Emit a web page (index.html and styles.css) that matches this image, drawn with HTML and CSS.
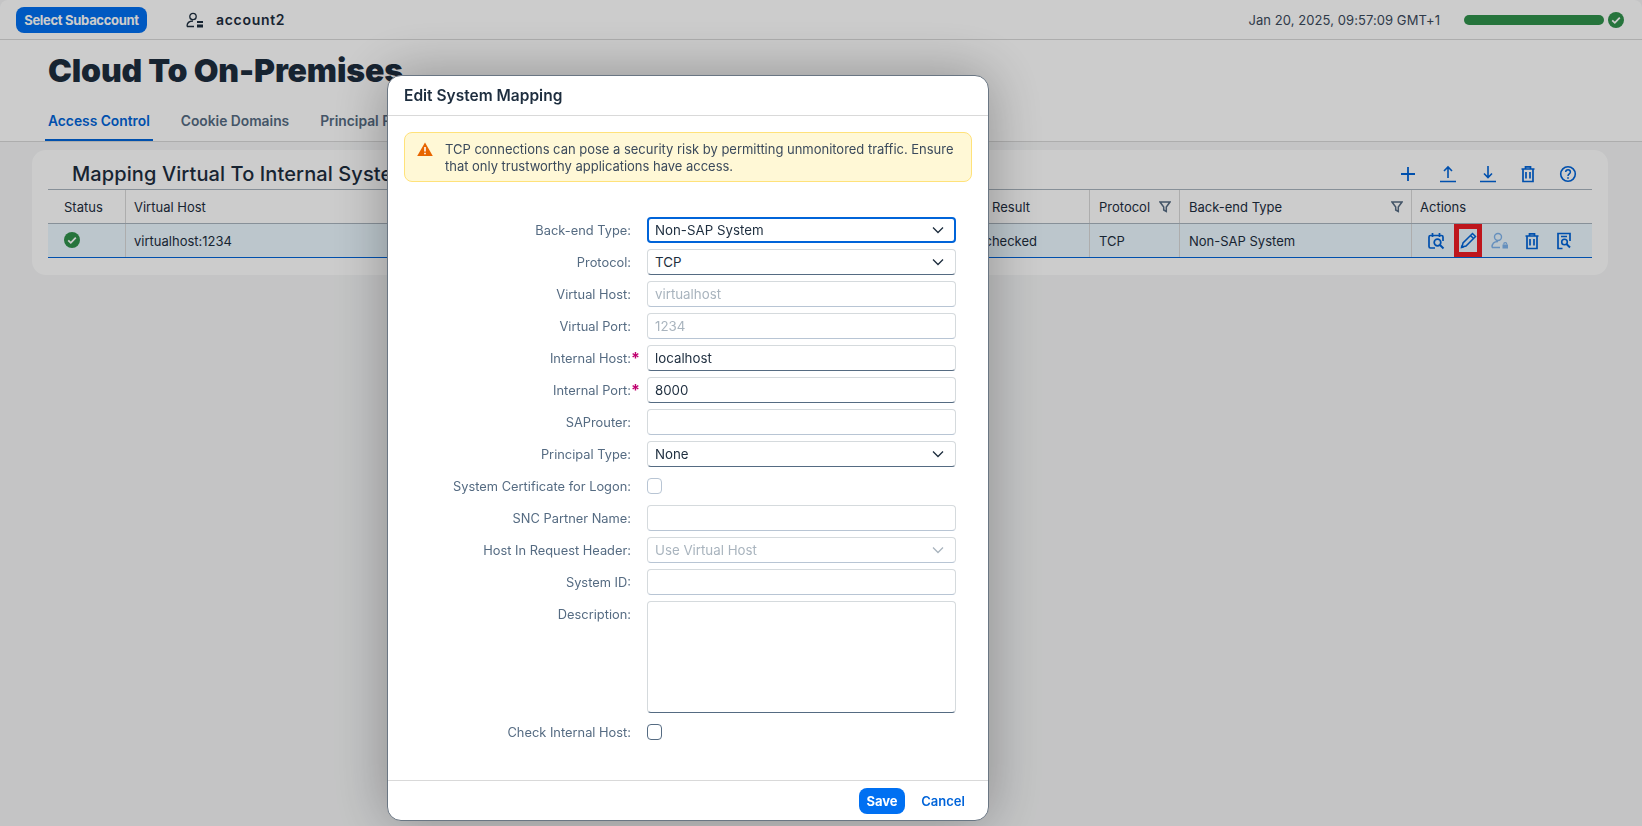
FILE: index.html
```html
<!DOCTYPE html>
<html lang="en">
<head>
    <meta charset="UTF-8">
    <title>Cloud To On-Premises</title>
    <link rel="stylesheet" href="styles.css">
</head>
<body>
    <div class="app">
        <header class="topbar">
            <button class="subaccount-btn">Select Subaccount</button>
            <svg class="account-icon" viewBox="0 0 18 16" width="18" height="16"><circle cx="7" cy="4.5" r="3.2" fill="none" stroke="#1d2d3e" stroke-width="1.3"/><path d="M1 14.5c0-4 2-5.5 6-5.5M1 14.5h7" fill="none" stroke="#1d2d3e" stroke-width="1.3"/><rect x="11" y="9" width="6" height="2" fill="#1d2d3e"/><rect x="11" y="12.5" width="6" height="3" fill="#1d2d3e"/></svg>
            <span class="account-name">account2</span>
            <span class="timestamp">Jan 20, 2025, 09:57:09 GMT+1</span>
            <span class="health-bar"></span>
            <svg class="ok-icon" viewBox="0 0 16 16" width="16" height="16"><circle cx="8" cy="8" r="8"/><path d="M4.2 8.3l2.6 2.5 5-5.2" fill="none" stroke="#fff" stroke-width="1.8"/></svg>
        </header>

        <section class="page-head">
            <h1>Cloud To On-Premises</h1>
            <nav class="tabs">
                <a class="tab tab-active">Access Control</a>
                <a class="tab">Cookie Domains</a>
                <a class="tab">Principal Propagation</a>
            </nav>
        </section>

        <section class="card">
            <div class="card-head">
                <h2>Mapping Virtual To Internal System</h2>
                <div class="toolbar">
                    <svg class="icon" viewBox="0 0 18 18"><path d="M9 2v14M2 9h14" stroke-width="1.8"/></svg>
                    <svg class="icon" viewBox="0 0 18 18"><path d="M9 13V2M5 6l4-4 4 4M1 16.5h16" stroke-width="1.6"/></svg>
                    <svg class="icon" viewBox="0 0 18 18"><path d="M9 1v11M5 8.5l4 4 4-4M1 16.5h16" stroke-width="1.6"/></svg>
                    <svg class="icon" viewBox="0 0 18 18"><path d="M2.500 4h13M6.500 4V1.800h5V4M4 4v12.500h10V4M7 7v6.500M11 7v6.500" stroke-width="1.7"/></svg>
                    <svg class="icon" viewBox="0 0 18 18"><circle cx="9" cy="9" r="7.300" stroke-width="1.6"/><path d="M6.700 7c0-3 4.700-3 4.700 0 0 2-2.400 1.800-2.400 4" stroke-width="1.5"/><path d="M9 12.300v1.500" stroke-width="1.700"/></svg>
                </div>
            </div>
            <div class="table">
                <div class="row row-head">
                    <div class="cell col-status">Status</div>
                    <div class="cell col-host">Virtual Host</div>
                    <div class="cell col-result head-result">Check Result</div>
                    <div class="cell col-protocol">Protocol<svg class="filter" viewBox="0 0 12 12"><path d="M1 1h10L7.300 6v4.500L4.700 9V6z"/></svg></div>
                    <div class="cell col-type">Back-end Type<svg class="filter" viewBox="0 0 12 12"><path d="M1 1h10L7.300 6v4.500L4.700 9V6z"/></svg></div>
                    <div class="cell col-actions">Actions</div>
                </div>
                <div class="row row-selected">
                    <div class="cell col-status"><svg class="ok-icon status-ok" viewBox="0 0 16 16" width="16" height="16"><circle cx="8" cy="8" r="8"/><path d="M4.200 8.300l2.600 2.500 5-5.200" fill="none" stroke="#fff" stroke-width="1.800"/></svg></div>
                    <div class="cell col-host">virtualhost:1234</div>
                    <div class="cell col-result">Unchecked</div>
                    <div class="cell col-protocol">TCP</div>
                    <div class="cell col-type">Non-SAP System</div>
                    <div class="cell col-actions action-icons">
                        <svg class="icon" viewBox="0 0 18 18"><path d="M8 16H3.500Q2 16 2 14.500V5Q2 3.500 3.500 3.500h11Q16 3.500 16 5v4M5.500 1v4M12.500 1v4" stroke-width="1.700"/><circle cx="10.500" cy="10.500" r="3.300" stroke-width="1.700"/><path d="M13 13l3.500 3.500" stroke-width="1.900"/></svg>
                        <span class="edit-mark"><svg class="icon" viewBox="0 0 18 18"><path d="M3 15l1-4L13.500 1.500l3 3L7 14zM11.500 3.500l3 3" stroke-width="1.500"/><path d="M1.500 16.500l.8-3.500 2.700 2.700z" fill="#0064d9" stroke="none"/></svg></span>
                        <svg class="icon icon-disabled" viewBox="0 0 18 18"><circle cx="7" cy="5" r="3.500" stroke-width="1.400"/><path d="M1 15.500c0-4 2-6 6-6M1 15.500h8" stroke-width="1.400"/><rect x="11.500" y="12.500" width="5.500" height="4" fill="#0064d9" stroke="none"/><path d="M12.700 12.500c0-2.500 3.100-2.500 3.100 0" stroke-width="1.200"/></svg>
                        <svg class="icon" viewBox="0 0 18 18"><path d="M2.500 4h13M6.500 4V1.800h5V4M4 4v12.500h10V4M7 7v6.500M11 7v6.500" stroke-width="1.700"/></svg>
                        <svg class="icon" viewBox="0 0 18 18"><path d="M7.500 16.500H3V1.500h12V9M6 4.500h6" stroke-width="1.700"/><circle cx="9.500" cy="10" r="2.800" stroke-width="1.600"/><path d="M11.500 12l3.500 3.500" stroke-width="1.900"/></svg>
                    </div>
                </div>
            </div>
        </section>
    </div>

    <div class="overlay"></div>

    <div class="dialog">
        <div class="dialog-title">Edit System Mapping</div>
        <div class="dialog-body">
            <div class="warning">
                <svg class="warn-icon" viewBox="0 0 16 14" width="16" height="14"><path d="M8 .5L15.800 14H.200z" fill="#e76500"/><path d="M8 5v4.500M8 10.700v1.600" stroke="#fff" stroke-width="1.600"/></svg>
                <p>TCP connections can pose a security risk by permitting unmonitored traffic. Ensure that only trustworthy applications have access.</p>
            </div>
            <form class="form">
                <label>Back-end Type:</label>
                <div class="field field-focus">Non-SAP System<svg class="chev" viewBox="0 0 12 8"><path d="M1 1.500l5 5 5-5"/></svg></div>
                <label>Protocol:</label>
                <div class="field">TCP<svg class="chev" viewBox="0 0 12 8"><path d="M1 1.500l5 5 5-5"/></svg></div>
                <label>Virtual Host:</label>
                <div class="field field-off">virtualhost</div>
                <label>Virtual Port:</label>
                <div class="field field-off">1234</div>
                <label class="required">Internal Host:</label>
                <div class="field">localhost</div>
                <label class="required">Internal Port:</label>
                <div class="field">8000</div>
                <label>SAProuter:</label>
                <div class="field field-off"></div>
                <label>Principal Type:</label>
                <div class="field">None<svg class="chev" viewBox="0 0 12 8"><path d="M1 1.500l5 5 5-5"/></svg></div>
                <label>System Certificate for Logon:</label>
                <div class="check-wrap"><span class="check check-off"></span></div>
                <label>SNC Partner Name:</label>
                <div class="field field-off"></div>
                <label>Host In Request Header:</label>
                <div class="field field-off">Use Virtual Host<svg class="chev chev-off" viewBox="0 0 12 8"><path d="M1 1.500l5 5 5-5"/></svg></div>
                <label>System ID:</label>
                <div class="field field-off"></div>
                <label class="label-top">Description:</label>
                <div class="field field-area"></div>
                <label>Check Internal Host:</label>
                <div class="check-wrap"><span class="check"></span></div>
            </form>
        </div>
        <div class="dialog-foot">
            <button class="btn-save">Save</button>
            <button class="btn-cancel">Cancel</button>
        </div>
    </div>
</body>
</html>
```

FILE: styles.css
```css
* {
    box-sizing: border-box;
}

html, body {
    height: 100%;
}

body {
    margin: 0;
    overflow: hidden;
    font-family: Inter, "Noto Sans", sans-serif;
    font-size: 13px;
    color: #1d2d3e;
    background: #f5f6f7;
}

.app {
    height: 100%;
}

.topbar {
    display: flex;
    align-items: center;
    height: 40px;
    padding: 0 18px 0 16px;
    background: #fff;
    border-bottom: 1px solid #d9d9d9;
    border-radius: 8px 8px 0 0;
}

.subaccount-btn {
    width: 131px;
    height: 26px;
    border: 0;
    border-radius: 8px;
    background: #0070f2;
    color: #fff;
    font: 700 13px Inter, sans-serif;
    letter-spacing: -.3px;
}

.account-icon {
    margin-left: 39px;
}

.account-name {
    margin-left: 12px;
    font-size: 14px;
    font-weight: 600;
    letter-spacing: .7px;
}

.timestamp {
    margin-left: auto;
    color: #3b4a5c;
    letter-spacing: .07px;
}

.health-bar {
    width: 140px;
    height: 10px;
    margin-left: 24px;
    border-radius: 5px;
    background: #30914c;
}

.topbar .ok-icon {
    margin-left: 4px;
}

.ok-icon circle {
    fill: #30914c;
}

.status-ok {
    margin-bottom: 2px;
}

.page-head {
    height: 102px;
    padding: 16px 48px 0;
    background: #fff;
    border-bottom: 1px solid #d9d9d9;
}

h1 {
    margin: 0;
    font-size: 32px;
    line-height: 30px;
    font-weight: 900;
    letter-spacing: -.15px;
}

.tabs {
    display: flex;
    gap: 31px;
    margin-top: 27px;
}

.tab {
    position: relative;
    padding-bottom: 12px;
    font-size: 13.8px;
    line-height: 16px;
    font-weight: 600;
    color: #556b82;
}

.tab-active {
    color: #0064d9;
}

.tab-active::after {
    content: "";
    position: absolute;
    left: -3px;
    right: -3px;
    bottom: 0;
    height: 2px;
    background: #0064d9;
}

.card {
    margin: 8px 34px 0 32px;
    padding: 0 16px 17px;
    border-radius: 14px;
    background: #fff;
}

.card-head {
    display: flex;
    align-items: center;
    justify-content: space-between;
    height: 39px;
    padding: 8px 15px 0 24px;
}

h2 {
    margin: 0;
    font-size: 20px;
    font-weight: 500;
    letter-spacing: .1px;
}

.toolbar {
    display: flex;
    gap: 22px;
}

.icon {
    width: 18px;
    height: 18px;
    flex: none;
    fill: none;
    stroke: #0064d9;
}

.icon-disabled {
    opacity: .45;
}

.table {
    border-top: 1px solid #a9b4be;
}

.row {
    display: flex;
    height: 34px;
    border-bottom: 1px solid #a9b4be;
}

.row-selected {
    background: #ebf8ff;
    border-bottom-color: #0064d9;
}

.cell {
    display: flex;
    align-items: center;
    justify-content: space-between;
    padding: 0 8px 0 9px;
    border-right: 1px solid #d9d9d9;
}

.col-status { width: 78px; padding-left: 16px; }
.col-host { width: 815px; padding-left: 8px; }
.col-result { width: 149px; justify-content: flex-end; padding-right: 52px; white-space: nowrap; }
.head-result { padding-right: 59px; }
.col-protocol { width: 90px; }
.col-type { width: 232px; }
.col-actions { flex: 1; padding-left: 8px; border-right: 0; }

.action-icons {
    justify-content: flex-start;
    gap: 14px;
    padding-left: 15px;
}

.filter {
    width: 12px;
    height: 12px;
    fill: none;
    stroke: #556b82;
    stroke-width: 1.5;
}

.edit-mark {
    display: flex;
    flex: none;
    align-items: center;
    justify-content: center;
    width: 28px;
    height: 33px;
    margin: 0 -5px;
    border: 5px solid #ee1c25;
}

.overlay {
    position: fixed;
    inset: 0;
    background: rgba(0, 0, 0, .2);
}

.dialog {
    position: fixed;
    left: 387px;
    top: 75px;
    width: 602px;
    height: 746px;
    display: flex;
    flex-direction: column;
    background: #fff;
    border: 1px solid #6a7683;
    border-radius: 14px;
    box-shadow: 0 0 56px rgba(0, 0, 0, .3);
}

.dialog-title {
    height: 40px;
    padding: 0 16px;
    line-height: 39px;
    font-size: 15.5px;
    font-weight: 600;
    border-bottom: 1px solid #d9d9d9;
}

.dialog-body {
    flex: 1;
    padding: 16px 16px 0;
}

.warning {
    display: flex;
    gap: 12px;
    height: 50px;
    padding: 8px 12px;
    background: #fff8d6;
    border: 1px solid #ffe27a;
    border-radius: 8px;
    line-height: 17px;
    letter-spacing: -.02px;
    color: #3b4a5c;
}

.warn-icon {
    flex: none;
    margin-top: 1px;
}

.warning p {
    margin: 0;
}

.form {
    display: grid;
    grid-template-columns: 227px 309px;
    grid-auto-rows: minmax(26px, auto);
    column-gap: 16px;
    row-gap: 6px;
    margin-top: 35px;
}

label {
    position: relative;
    display: flex;
    align-items: center;
    justify-content: flex-end;
    font-size: 12.85px;
    color: #556b82;
}

.required::after {
    content: "*";
    position: absolute;
    right: -9px;
    top: 3px;
    color: #c0006f;
    font-size: 16px;
    font-weight: 700;
}

.label-top {
    align-items: flex-start;
    padding-top: 1px;
    line-height: 26px;
}

.field {
    display: flex;
    align-items: center;
    justify-content: space-between;
    height: 26px;
    padding: 0 7px;
    font-size: 13.3px;
    background: #fff;
    border: 1px solid #d5dadd;
    border-bottom-color: #556b82;
    border-radius: 4px;
    color: #1d2d3e;
}

.field-off {
    border-bottom-color: #b8c5d4;
    color: #a9b4be;
}

.field-focus {
    border: 2px solid #0064d9;
    padding: 0 6px;
}

.field-area {
    height: 112px;
}

.chev {
    width: 12px;
    height: 8px;
    margin-right: 4px;
    fill: none;
    stroke: #1d2d3e;
    stroke-width: 1.3;
}

.chev-off {
    stroke: #a9b4be;
}

.check-wrap {
    display: flex;
    align-items: center;
}

.check {
    width: 15px;
    height: 16px;
    border: 1px solid #556b82;
    border-radius: 4px;
}

.check-off {
    border-color: #b8c5d4;
}

.dialog-foot {
    display: flex;
    align-items: center;
    justify-content: flex-end;
    gap: 12px;
    height: 40px;
    padding-right: 19px;
    border-top: 1px solid #d9d9d9;
}

.btn-save {
    width: 46px;
    height: 26px;
    border: 0;
    border-radius: 8px;
    background: #0070f2;
    color: #fff;
    font: 700 13px Inter, sans-serif;
}

.btn-cancel {
    width: 52px;
    height: 26px;
    padding: 0;
    border: 0;
    background: transparent;
    color: #0064d9;
    font: 600 13px Inter, sans-serif;
}
```
